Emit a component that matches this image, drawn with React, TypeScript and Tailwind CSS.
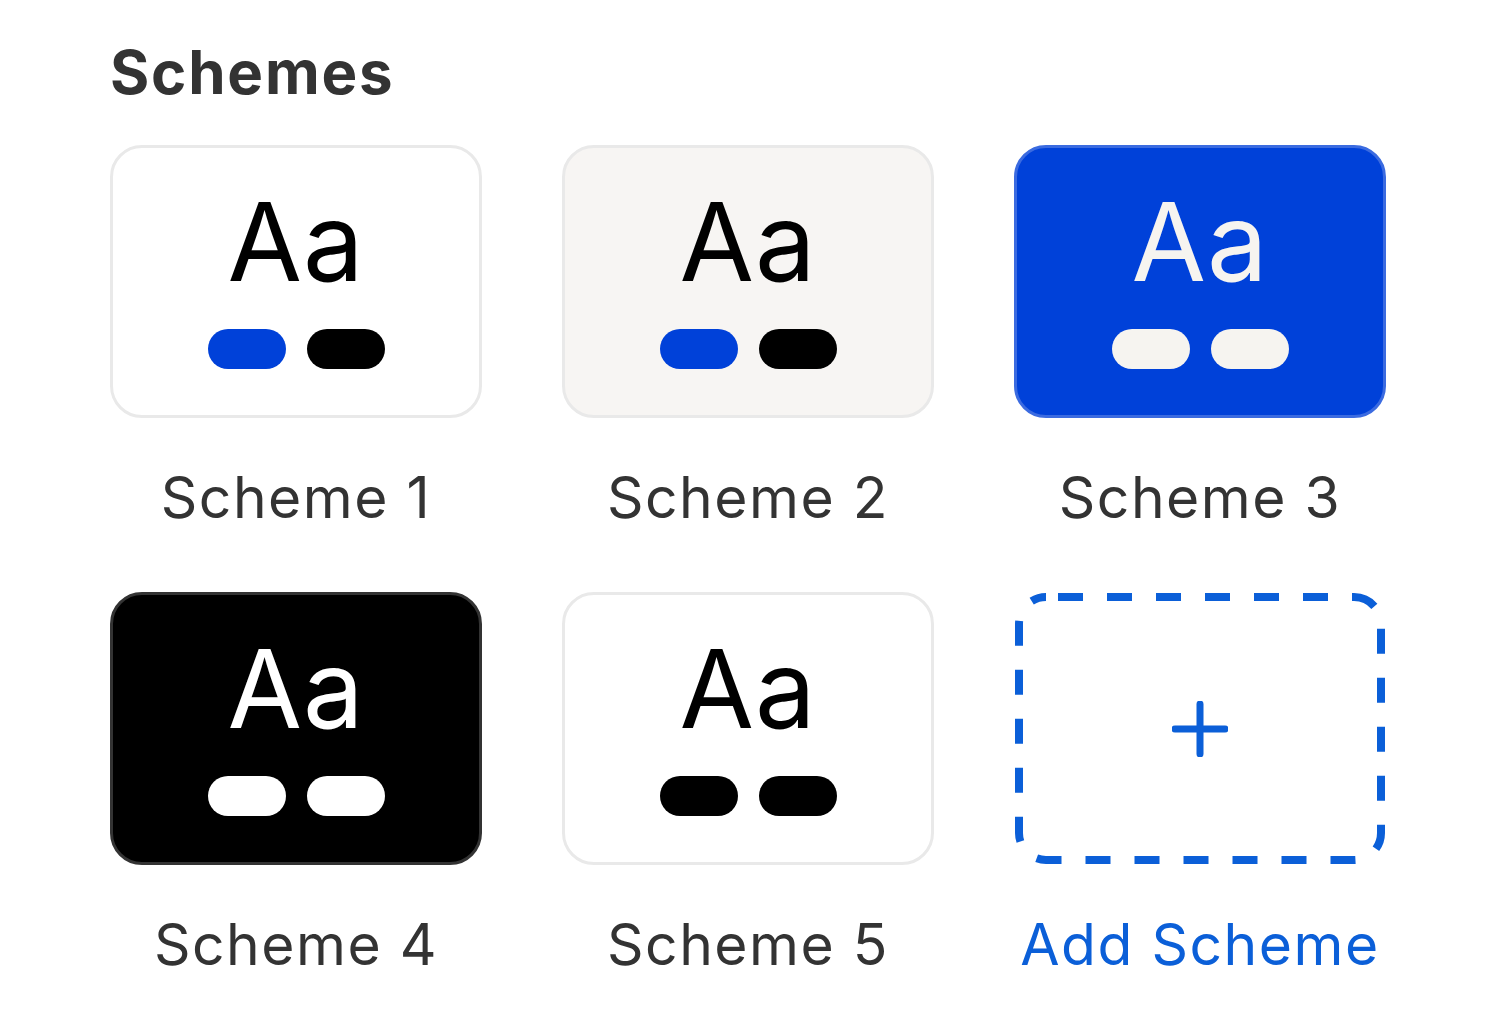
import React from 'react';

interface Scheme {
  name: string;
  card: string;
  text: string;
  pillA: string;
  pillB: string;
}

const schemes: Scheme[] = [
  { name: 'Scheme 1', card: 'bg-white border-[#e9e9e9]', text: 'text-black', pillA: 'bg-[#0041d9]', pillB: 'bg-black' },
  { name: 'Scheme 2', card: 'bg-[#f7f5f3] border-[#e9e9e9]', text: 'text-black', pillA: 'bg-[#0041d9]', pillB: 'bg-black' },
  { name: 'Scheme 3', card: 'bg-[#0041d9] border-[#3b6be0]', text: 'text-[#f6f4f0]', pillA: 'bg-[#f6f4f0]', pillB: 'bg-[#f6f4f0]' },
  { name: 'Scheme 4', card: 'bg-black border-[#333333]', text: 'text-white', pillA: 'bg-white', pillB: 'bg-white' },
  { name: 'Scheme 5', card: 'bg-white border-[#e9e9e9]', text: 'text-black', pillA: 'bg-black', pillB: 'bg-black' },
];

const SchemeCard: React.FC<{ scheme: Scheme }> = ({ scheme }) => (
  <div className="flex flex-col items-center">
    <div
      className={`w-[372px] h-[273px] rounded-[32px] border-[3px] flex flex-col items-center pt-[40px] ${scheme.card}`}
    >
      <div className={`text-[108px] leading-none font-normal tracking-[1px] ${scheme.text}`}>Aa</div>
      <div className="mt-[33px] flex gap-[21px]">
        <div className={`w-[78px] h-[40px] rounded-full ${scheme.pillA}`}></div>
        <div className={`w-[78px] h-[40px] rounded-full ${scheme.pillB}`}></div>
      </div>
    </div>
    <div className="mt-[46px] text-[57px] leading-[68px] tracking-[1.5px] text-[#333333]">{scheme.name}</div>
  </div>
);

const AddSchemeCard: React.FC = () => (
  <div className="flex flex-col items-center">
    <div className="relative w-[372px] h-[273px] flex items-center justify-center">
      {/* dashed outline */}
      <svg className="absolute inset-0" width="372" height="273" viewBox="0 0 372 273">
        <rect
          x="5"
          y="5"
          width="362"
          height="263"
          rx="27"
          fill="none"
          stroke="#0b5fd8"
          strokeWidth="8"
          strokeDasharray="25 24"
          strokeDashoffset="-12"
        />
      </svg>
      <svg width="56" height="56" viewBox="0 0 56 56">
        <path d="M28 3v50M3 28h50" stroke="#0b5fd8" strokeWidth="7" strokeLinecap="round" />
      </svg>
    </div>
    <div className="mt-[46px] text-[57px] leading-[68px] tracking-[1.5px] text-[#0b5fd8]">Add Scheme</div>
  </div>
);

export default function App() {
  return (
    <div className="w-[1500px] h-[1016px] bg-white pl-[110px] pt-[42px] font-['Inter','Liberation_Sans',sans-serif]">
      <h2 className="text-[60px] leading-[60px] font-bold text-[#333333] tracking-[1.8px]">Schemes</h2>
      <div className="mt-[43px] grid grid-cols-[372px_372px_372px] gap-x-[80px] gap-y-[60px]">
        {schemes.map(s => (
          <SchemeCard key={s.name} scheme={s} />
        ))}
        <AddSchemeCard />
      </div>
    </div>
  );
}
